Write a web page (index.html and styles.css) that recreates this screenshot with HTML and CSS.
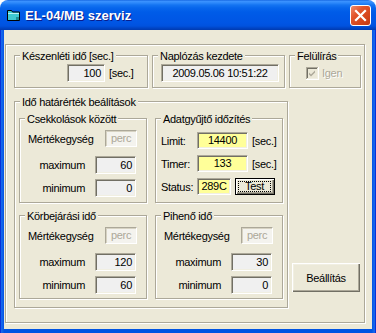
FILE: index.html
```html
<!DOCTYPE html>
<html lang="hu">
<head>
<meta charset="utf-8">
<title>EL-04/MB szerviz</title>
<link rel="stylesheet" href="styles.css">
</head>
<body>
<div class="window">
  <div class="titlebar">
    <svg class="app-icon" width="13" height="11" viewBox="0 0 13 11">
      <path d="M0.5 0.5h4l1 1.5h7v8.5h-12z" fill="#3FC9D2" stroke="#000"/>
      <rect x="1" y="3" width="11" height="1" fill="#B8F4F8"/>
      <path d="M9 7h3v3h-3z" fill="#1C8C96"/>
    </svg>
    <span class="title">EL-04/MB szerviz</span>
    <div class="close">
      <svg width="19" height="19" viewBox="0 0 19 19"><path d="M5 5L14 14M14 5L5 14" stroke="#fff" stroke-width="2.2" stroke-linecap="square"/></svg>
    </div>
  </div>
  <div class="body">
    <div class="client">
      <div class="frame">
        <div class="top-row">
          <div class="grp grp-top">
            <div class="grp-title">Készenléti idő [sec.]</div>
            <div class="ready-row">
              <span class="tb tb-ready">100</span>
              <span>[sec.]</span>
            </div>
          </div>
          <div class="grp grp-top">
            <div class="grp-title">Naplózás kezdete</div>
            <div class="log-row">
              <span class="tb tb-log">2009.05.06 10:51:22</span>
            </div>
          </div>
          <div class="grp grp-top">
            <div class="grp-title">Felülírás</div>
            <div class="check-row">
              <svg class="check" width="13" height="13" viewBox="0 0 13 13">
                <rect x="0" y="0" width="13" height="13" fill="#fff"/>
                <rect x="0" y="0" width="12" height="12" fill="#ACA899"/>
                <rect x="1" y="1" width="11" height="11" fill="#F1EFE2"/>
                <rect x="1" y="1" width="10" height="10" fill="#716F64"/>
                <rect x="2" y="2" width="9" height="9" fill="#ECE9D8"/>
                <path d="M3 5.5l2 2 4-4v2l-4 4-2-2z" fill="#ACA899"/>
              </svg>
              <span class="disabled-label">Igen</span>
            </div>
          </div>
        </div>
        <div class="bottom-row">
          <div class="grp grp-limits">
            <div class="grp-title">Idő határérték beálítások</div>
            <div class="limits-grid">
              <div class="grp grp-sub grp-sub-a">
                <div class="grp-title">Csekkolások között</div>
                <div class="unit-row"><span>Mértékegység</span><span class="tb tb-unit">perc</span></div>
                <div class="mm-row mm-max"><span class="mm-label">maximum</span><span class="tb tb-num">60</span></div>
                <div class="mm-row mm-min"><span class="mm-label">minimum</span><span class="tb tb-num">0</span></div>
              </div>
              <div class="grp grp-sub grp-sub-a">
                <div class="grp-title">Adatgyűjtő időzítés</div>
                <div class="timer-grid">
                  <span class="t-label">Limit:</span><span class="tb tb-yellow tb-wide">14400</span><span class="t-unit">[sec.]</span>
                  <span class="t-label">Timer:</span><span class="tb tb-yellow tb-wide">133</span><span class="t-unit">[sec.]</span>
                  <span class="t-label">Status:</span>
                  <span class="status-cell"><span class="tb tb-yellow tb-status">289C</span><span class="btn-test"><span class="focus">Test</span></span></span>
                </div>
              </div>
              <div class="grp grp-sub grp-sub-b">
                <div class="grp-title">Körbejárási idő</div>
                <div class="unit-row"><span>Mértékegység</span><span class="tb tb-unit">perc</span></div>
                <div class="mm-row mm-max"><span class="mm-label">maximum</span><span class="tb tb-num">120</span></div>
                <div class="mm-row mm-min"><span class="mm-label">minimum</span><span class="tb tb-num">60</span></div>
              </div>
              <div class="grp grp-sub grp-sub-b">
                <div class="grp-title">Pihenő idő</div>
                <div class="unit-row"><span>Mértékegység</span><span class="tb tb-unit">perc</span></div>
                <div class="mm-row mm-max"><span class="mm-label">maximum</span><span class="tb tb-num">30</span></div>
                <div class="mm-row mm-min"><span class="mm-label">minimum</span><span class="tb tb-num">0</span></div>
              </div>
            </div>
          </div>
          <button class="btn-main" type="button">Beállítás</button>
        </div>
      </div>
    </div>
  </div>
</div>
</body>
</html>
```
FILE: styles.css
```css
* { box-sizing: border-box; }
html, body { margin: 0; padding: 0; background: #fff; }
body {
  font-family: "Liberation Sans", Arial, sans-serif;
  font-size: 11px;
  letter-spacing: -0.3px;
  color: #000;
}

.window {
  width: 376px;
  height: 333px;
  border-radius: 8px 8px 0 0;
  overflow: hidden;
  display: flex;
  flex-direction: column;
}

.titlebar {
  flex: none;
  height: 30px;
  display: flex;
  align-items: center;
  padding: 0 5px 0 7px;
  background: linear-gradient(to bottom,
    #0A5BDA 0px, #3E94FF 1px, #2C88FA 3px, #1474F2 5px, #0766EC 8px,
    #005CE8 12px, #0058E6 17px, #0055E4 23px, #0052DE 26px, #0045C6 28px, #003AB0 30px);
}
.app-icon { flex: none; margin-right: 5px; margin-top: 1px; }
.title {
  flex: 1;
  color: #fff;
  font-weight: bold;
  font-size: 13px;
  letter-spacing: 0;
  text-shadow: 1px 1px 0 #0A1D8C;
}
.close {
  flex: none;
  width: 21px;
  height: 21px;
  border: 1px solid #fff;
  border-radius: 3px;
  background: linear-gradient(135deg, #F08C6E 0%, #E2552C 35%, #D5451B 70%, #C23A14 100%);
  display: flex;
}

.body {
  flex: 1;
  display: flex;
  padding: 0 4px 4px;
  background: linear-gradient(to right, #0831D9 0, #0831D9 1px, #166AEE 1px, #0F5EE8 3px, #0054E3 4px, #0054E3 372px, #0F5EE8 373px, #166AEE 375px, #0831D9 375px);
}
.client {
  flex: 1;
  background: #ECE9D8;
  padding: 14px 7px 6px 1px;
}

.grp, .frame {
  border: 1px solid #ACA899;
  box-shadow: 1px 1px 0 #fff, inset 1px 1px 0 #fff;
}
.frame {
  height: 279px;
  padding: 10px 0 0 8px;
}
.grp-title {
  width: fit-content;
  height: 13px;
  line-height: 13px;
  margin: -6px 0 0 5px;
  padding: 0 2px;
  background: #ECE9D8;
  white-space: nowrap;
}

.top-row {
  display: grid;
  grid-template-columns: 134px 133px 72px;
  column-gap: 4px;
}
.grp-top { height: 33px; }

.tb {
  display: block;
  height: 18px;
  line-height: 16px;
  border: 1px solid;
  border-color: #ACA899 #fff #fff #ACA899;
  box-shadow: inset 1px 1px 0 #716F64, inset -1px -1px 0 #F1EFE2;
  background: #F0F0F0;
  padding: 0 3px;
  text-align: right;
  white-space: nowrap;
}

.ready-row {
  display: flex;
  align-items: center;
  gap: 4px;
  margin-top: 1px;
  padding-left: 52px;
}
.tb-ready { width: 38px; }

.log-row { margin-top: 1px; padding-left: 8px; }
.tb-log { width: 118px; text-align: center; padding: 0; }

.check-row {
  display: flex;
  align-items: center;
  height: 18px;
  margin-top: 1px;
  padding-left: 16px;
  gap: 3px;
}
.check { flex: none; }
.disabled-label { color: #ACA899; text-shadow: 1px 1px 0 #fff; }

.bottom-row {
  display: flex;
  align-items: flex-end;
  gap: 4px;
  margin-top: 13px;
}
.grp-limits {
  width: 274px;
  height: 207px;
  flex: none;
}
.limits-grid {
  display: grid;
  grid-template-columns: 128px 128px;
  grid-template-rows: 85px 84px;
  column-gap: 8px;
  row-gap: 12px;
  margin: 9px 0 0 4px;
}

.unit-row {
  display: flex;
  justify-content: space-between;
  align-items: center;
  height: 17px;
  margin-top: 4px;
  padding: 0 9px 0 8px;
}
.tb-unit {
  width: 32px;
  height: 17px;
  line-height: 15px;
  color: #ACA899;
  background: #F4F3EE;
  box-shadow: inset 1px 1px 0 #D6D2C2;
  border-color: #ACA899 #fff #fff #ACA899;
  text-align: center;
  padding: 0;
}
.mm-row {
  display: grid;
  grid-template-columns: 65px 41px;
  column-gap: 10px;
  align-items: center;
}
.mm-max { margin-top: 9px; }
.mm-min { margin-top: 5px; }
.mm-label { text-align: right; }
.tb-num { width: 41px; }

.timer-grid {
  display: grid;
  grid-template-columns: 36px 51px auto;
  grid-auto-rows: 17px;
  row-gap: 6px;
  align-items: center;
  margin-top: 6px;
  padding-left: 5px;
}
.tb-yellow {
  background: #FFFF99;
  height: 17px;
  line-height: 15px;
  text-align: center;
  padding: 0;
}
.tb-wide { width: 51px; }
.t-unit { margin-left: 4px; }
.status-cell {
  grid-column: 2 / 4;
  display: flex;
  align-items: center;
  gap: 4px;
}
.tb-status { width: 34px; }
.btn-test {
  width: 40px;
  height: 17px;
  border: 1px solid #000;
  background: #ECE9D8;
  box-shadow: inset 1px 1px 0 #fff, inset -1px -1px 0 #716F64, inset -2px -2px 0 #ACA899;
  padding: 2px 3px 2px 2px;
  display: flex;
}
.focus {
  flex: 1;
  border: 1px dotted #000;
  line-height: 9px;
  text-align: center;
}

.btn-main {
  flex: none;
  width: 68px;
  height: 29px;
  margin-bottom: 16px;
  border: none;
  padding: 0;
  background: #ECE9D8;
  box-shadow: inset 1px 1px 0 #fff, inset -1px -1px 0 #716F64, inset -2px -2px 0 #ACA899, inset 2px 2px 0 #F1EFE2;
  font-family: "Liberation Sans", Arial, sans-serif;
  font-size: 11px;
  letter-spacing: -0.3px;
  color: #000;
}
```
